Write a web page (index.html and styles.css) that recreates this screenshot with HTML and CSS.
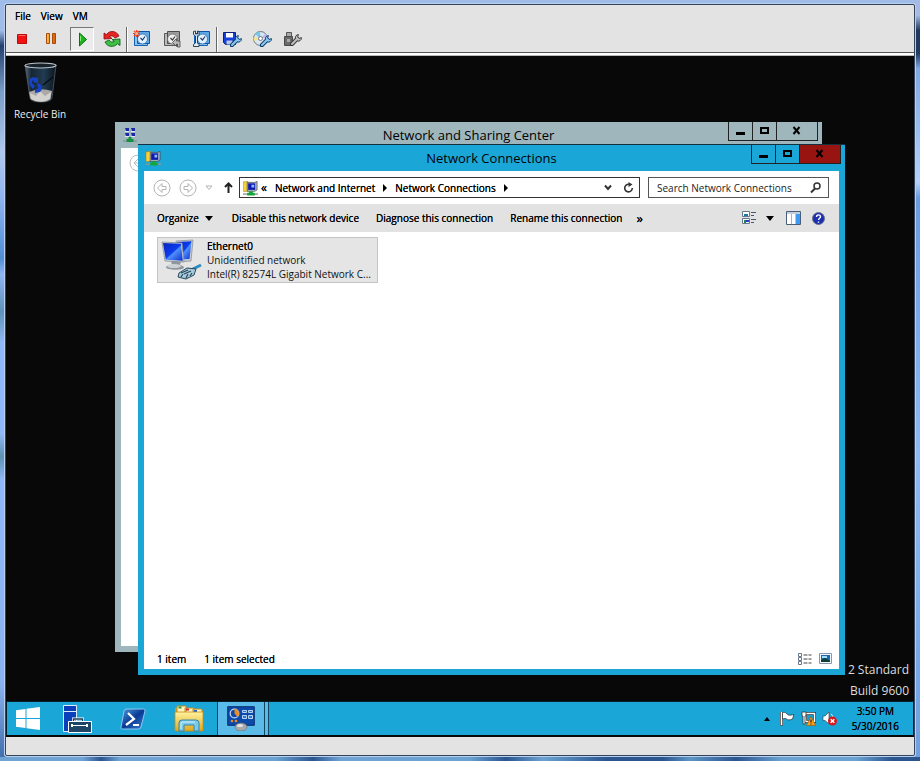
FILE: index.html
```html
<!DOCTYPE html>
<html lang="en">
<head>
  <meta charset="UTF-8">
  <meta name="viewport" content="width=device-width, initial-scale=1.0">
  <title>Network Connections</title>
  <link rel="stylesheet" href="styles.css">
</head>
<body>

<!-- shared shapes -->
<svg width="0" height="0" class="defs" aria-hidden="true">
  <defs>
    <linearGradient id="screen" x1="0" y1="0" x2="1" y2="1">
      <stop offset="0" stop-color="#0a24b8"/><stop offset=".5" stop-color="#0c3df0"/><stop offset=".55" stop-color="#4f90ff"/><stop offset="1" stop-color="#0c2cc8"/>
    </linearGradient>
    <linearGradient id="folder" x1="0" y1="0" x2="0" y2="1">
      <stop offset="0" stop-color="#fff2a0"/><stop offset="1" stop-color="#e0a81c"/>
    </linearGradient>
    <linearGradient id="bin" x1="0" y1="0" x2="1" y2="0">
      <stop offset="0" stop-color="#596b7b"/><stop offset=".2" stop-color="#162634"/><stop offset=".6" stop-color="#213b50"/><stop offset="1" stop-color="#0c151d"/>
    </linearGradient>
    <linearGradient id="ps" x1="0" y1="0" x2="1" y2="1">
      <stop offset="0" stop-color="#4f9ee0"/><stop offset=".5" stop-color="#0a3a94"/><stop offset="1" stop-color="#3a84d0"/>
    </linearGradient>
    <linearGradient id="pause" x1="0" y1="0" x2="1" y2="0">
      <stop offset="0" stop-color="#ffc04a"/><stop offset="1" stop-color="#d85a00"/>
    </linearGradient>
    <symbol id="net-folder" viewBox="0 0 16 16">
      <path d="M0 1.500L5 1l1 1v9l-5 1-1-1z" fill="#f6d23c" stroke="#a58318" stroke-width=".6"/>
      <path d="M4.500 2h8l2.500-1v9l-2.500 1.500h-8z" fill="#b4bac6" stroke="#333945" stroke-width=".7"/>
      <path d="M5.500 3H13v7H5.500z" fill="#0d1ab0"/><path d="M9 4.500h3v3H9z" fill="#8fb8ff"/>
      <path d="M0 14.500h16" stroke="#8c9892" stroke-width="1.500"/>
      <path d="M6.500 11.500h4V13h2v3h-8v-3h2z" fill="#13a63c"/>
    </symbol>
    <symbol id="snapshot" viewBox="0 0 18 18">
      <path d="M1.500 3.500h13v12h-13z" fill="#8cc4f0" stroke="#1562b4"/>
      <path d="M4.500 1.500h12v12h-12z" fill="#5fa8e6" stroke="#0c55aa"/>
      <circle cx="9.500" cy="9" r="5" fill="#e3f1fd" stroke="#2a6cb0" stroke-width=".8"/>
      <path d="M7.500 8l2 2 2.500-3.500" fill="none" stroke="#1c3f70" stroke-width="1.200"/>
    </symbol>
    <symbol id="wrench" viewBox="0 0 10 10">
      <path d="M1.500 8.500L6 4" stroke="#0d3d6e" stroke-width="3.400" stroke-linecap="round"/>
      <path d="M5 4.500a2.500 2.500 0 0 1 2-4l-.6 2 1.200 1.200L9.500 3a2.500 2.500 0 0 1-4 2.400z" fill="#8cc8ee" stroke="#0d3d6e" stroke-width=".8"/>
      <path d="M1.700 8.300L6 4" stroke="#8cc8ee" stroke-width="1.800" stroke-linecap="round"/>
    </symbol>
  </defs>
</svg>

<main class="console">
  <nav class="menu">
    <button>File</button>
    <button>View</button>
    <button>VM</button>
  </nav>

  <div class="toolbar">
    <div class="tools">
      <button aria-label="Power off"><svg width="18" height="18"><path d="M4.500 4.500h9v9h-9z" fill="#f31111" stroke="#b80b0b"/><path d="M5.500 5.500h7" stroke="#ff6a5e"/></svg></button>
      <button aria-label="Suspend"><svg width="18" height="18"><path d="M3.500 3.500h3v10h-3zM9.500 3.500h3v10h-3z" fill="url(#pause)" stroke="#a84a08"/></svg></button>
      <button class="pressed" aria-label="Power on"><svg width="18" height="18"><path d="M6.500 3v13l7-6.500z" fill="#1fb51f" stroke="#0d6d12"/><path d="M7.500 6v5" stroke="#83ea74"/></svg></button>
      <button aria-label="Reset"><svg width="18" height="18"><path d="M1 9V3L3.500 4.500c3-4.500 10-4 12.500 1.500L12 8C10 5.500 8 5.500 6.500 6.500L9 8.500z" fill="#e52323" stroke="#8c0c0c" stroke-width=".8"/><path d="M17 9v6.500l-2.600-1.700c-3.500 4-10 3.500-12.400-1.800l4-2c1.600 2.300 3.500 2.500 5.300 1.300L9 9.500z" fill="#3fc044" stroke="#0a5411" stroke-width=".8"/></svg></button>
    </div>
    <span class="split"></span>
    <div class="tools">
      <button aria-label="Take snapshot"><svg width="18" height="18"><use href="#snapshot"/><path d="M3.500 0v7M0 3.500h7M1 1l5 5M6 1L1 6" stroke="#f04a24" stroke-width="1.200"/><circle cx="3.500" cy="3.500" r="1.500" fill="#ffb08a"/></svg></button>
      <button aria-label="Revert to snapshot" class="off"><svg width="18" height="18"><use href="#snapshot"/><path d="M9.500 12.500l4-4v2.500h3.500v6h-2.500v-3h-1V16.500z" fill="#bbb" stroke="#444" stroke-width=".8"/></svg></button>
      <button aria-label="Manage snapshots"><svg width="18" height="18"><use href="#snapshot"/><path d="M.5 1.500v3L2.500 6v7l-2 1.500v2h5.500v-2L4.500 13V6L6 4.500v-3L4.500 1v3h-2V1z" fill="#dcecf6" stroke="#20303e" stroke-width=".9"/></svg></button>
    </div>
    <span class="split"></span>
    <div class="tools">
      <button aria-label="Floppy settings"><svg width="20" height="18"><path d="M1.500 2.500h12v12h-10l-2-2z" fill="#1640d8" stroke="#0b2078"/><path d="M4 3h7v4.500H4z" fill="#fff"/><path d="M4.500 10.500h6v4h-6z" fill="#b8c8e8"/><use href="#wrench" x="8" y="5" width="12" height="12"/></svg></button>
      <button aria-label="CD/DVD settings"><svg width="20" height="18"><circle cx="8.500" cy="8.500" r="7" fill="#dbe6f0" stroke="#6b7784"/><path d="M8.500 8.500L3 4a7 7 0 0 1 5-2.500z" fill="#73c8e8"/><path d="M8.500 8.500L2 11a7 7 0 0 1-.2-4z" fill="#f1e58f"/><path d="M8.500 8.500l5-5a7 7 0 0 1 2 4z" fill="#c8b3ef"/><circle cx="8.500" cy="8.500" r="2" fill="#fff" stroke="#778"/><use href="#wrench" x="8" y="5" width="12" height="12"/></svg></button>
      <button aria-label="USB settings" class="off"><svg width="20" height="18"><path d="M4.500 2.500h5v4h-5z" fill="#aaa" stroke="#555"/><path d="M2.500 6.500h8v9h-8z" fill="#6a6a6a" stroke="#4a4a4a"/><path d="M5 9h3v3H5z" fill="#aaa"/><use href="#wrench" x="8" y="4" width="12" height="12"/></svg></button>
    </div>
  </div>

  <section class="desktop">
    <a class="shortcut" href="#">
      <svg width="36" height="42" viewBox="0 0 36 42">
        <path d="M3 3l5 33q1 4 11 4t11-4l4-33z" fill="url(#bin)" stroke="#4f5d68" stroke-width=".8"/>
        <path d="M7 30q11-5 23-1l-1.500 8Q25 40 19 40T8.500 37z" fill="#aaa9a7"/>
        <path d="M8 31l6 3 4-5 5 5 6-4-1 7q-9 5-19 0z" fill="#d3d2cf"/>
        <path d="M8 17q2-3 6-1l2-1v6l-5-1 1-2q-2 0-2 3l3 3-2 3q-5-4-3-10zM16 21l3 2q2 5-1 7l-5 1v-3l3-1q1-2-1-4z" fill="#1742c8"/>
        <path d="M31 15l-10 8" stroke="#070d12" stroke-width="1.500"/>
        <ellipse cx="18.500" cy="3.500" rx="15.500" ry="2.500" fill="#17212a" stroke="#b9c4cc" stroke-width="1.200"/>
      </svg>
      Recycle Bin
    </a>

    <p class="watermark">2 Standard<br>Build 9600</p>

    <section class="window back">
      <header class="titlebar">
        <svg class="app-icon" width="14" height="16" viewBox="0 0 14 16"><path d="M2 1h4v3H3zM8 1h4v3H9zM2 6h4v3H3zM8 6h4v3H9z" fill="#1a28a8"/><path d="M2 4.500h4M8 4.500h4M2 9.500h4M8 9.500h4" stroke="#dfe8ee"/><path d="M0 14h14" stroke="#7e8a8e"/><path d="M5.500 10h3v2h2v3h-7v-3h2z" fill="#10923c"/></svg>
        <h2>Network and Sharing Center</h2>
        <div class="caption">
          <button aria-label="Minimize"><svg width="10" height="10"><path d="M0 6h9v3H0z"/></svg></button>
          <button aria-label="Maximize"><svg width="10" height="10"><path d="M1 2h7v5H1z" fill="none" stroke="#000" stroke-width="2"/></svg></button>
          <button class="close" aria-label="Close"><svg width="10" height="10"><path d="M1.500 1l6 7M7.500 1l-6 7" stroke="#000" stroke-width="2"/></svg></button>
        </div>
      </header>
      <div class="pane back-pane">
        <svg width="18" height="18"><circle cx="9" cy="9" r="8" fill="none" stroke="#bbb"/><path d="M13 9H5m4-4L5 9l4 4" fill="none" stroke="#bbb"/></svg>
      </div>
    </section>

    <section class="window front">
      <header class="titlebar">
        <svg class="app-icon" width="15" height="16"><use href="#net-folder"/></svg>
        <h1>Network Connections</h1>
        <div class="caption">
          <button aria-label="Minimize"><svg width="10" height="10"><path d="M0 6h9v3H0z"/></svg></button>
          <button aria-label="Maximize"><svg width="10" height="10"><path d="M1 2h7v5H1z" fill="none" stroke="#000" stroke-width="2"/></svg></button>
          <button class="close" aria-label="Close"><svg width="10" height="10"><path d="M1.500 1l6 7M7.500 1l-6 7" stroke="#000" stroke-width="2"/></svg></button>
        </div>
      </header>

      <div class="pane">
        <div class="address-row">
          <button aria-label="Back"><svg width="18" height="18"><circle cx="9" cy="9" r="8" fill="none" stroke="#b4b4b4"/><path d="M4.500 9L9 4.500V7.500h4v3H9v3z" fill="#fff" stroke="#b4b4b4"/></svg></button>
          <button aria-label="Forward"><svg width="18" height="18"><circle cx="9" cy="9" r="8" fill="none" stroke="#b4b4b4"/><path d="M13.500 9L9 4.500V7.500H5v3h4v3z" fill="#fff" stroke="#b4b4b4"/></svg></button>
          <button class="recent" aria-label="Recent locations"><svg width="8" height="6"><path d="M1 1h6L4 4.500z" fill="#fff" stroke="#b4b4b4"/></svg></button>
          <button class="up" aria-label="Up"><svg width="9" height="11"><path d="M4.500 11V2M1 5l3.500-3.500L8 5" fill="none" stroke="#222" stroke-width="2"/></svg></button>
          <div class="address">
            <svg width="15" height="16"><use href="#net-folder"/></svg>
            <span class="more">«</span>
            <a href="#">Network and Internet</a>
            <svg width="4" height="8"><path d="M0 0l4 4-4 4z"/></svg>
            <a href="#">Network Connections</a>
            <svg width="4" height="8"><path d="M0 0l4 4-4 4z"/></svg>
            <button class="history" aria-label="Previous locations"><svg width="8" height="7"><path d="M1 1.500L4 5l3-3.500" fill="none" stroke="#333" stroke-width="2"/></svg></button>
            <button aria-label="Refresh"><svg width="11" height="11"><path d="M6 2.300A3.800 3.800 0 1 0 9.300 6" fill="none" stroke="#333" stroke-width="1.600"/><path d="M5.500 0l4 2.500-4 2.500z" fill="#333"/></svg></button>
          </div>
          <label class="search">
            <input type="search" placeholder="Search Network Connections" aria-label="Search Network Connections">
            <svg width="11" height="11"><circle cx="7" cy="4" r="3" fill="none" stroke="#333" stroke-width="1.500"/><path d="M5 6.500L1 10.500" stroke="#333" stroke-width="2"/></svg>
          </label>
        </div>

        <div class="commands">
          <button class="organize">Organize <svg width="8" height="5"><path d="M0 0h8L4 5z"/></svg></button>
          <button>Disable this network device</button>
          <button>Diagnose this connection</button>
          <button>Rename this connection</button>
          <button class="overflow" aria-label="More commands">»</button>
          <button class="view" aria-label="Change view">
            <svg width="15" height="14"><path d="M.5.500h7v5h-7zM.5 7.500h7v5h-7z" fill="#fff" stroke="#68788c"/><path d="M2 3h4v2H2z" fill="#177aa8"/><path d="M2 9h2v3H2z" fill="#178c4a"/><path d="M4 9h3v2H4z" fill="#293bb8"/><path d="M9 1.500h5M9 4.500h3M9 8.500h5M9 11.500h3" stroke="#48586c"/></svg>
          </button>
          <button class="drop" aria-label="View options"><svg width="8" height="5"><path d="M0 0h8L4 5z"/></svg></button>
          <button class="preview" aria-label="Preview pane"><svg width="15" height="14"><path d="M.5.500h14v13H.5z" fill="#fff" stroke="#4a5c78"/><path d="M1 1h13v2H1z" fill="#c3cedb"/><path d="M9.500 3h4.500v10H9.500z" fill="#3f9bf2"/><path d="M5.500 3v10" stroke="#a8b0bb"/></svg></button>
          <button class="help" aria-label="Help"><svg width="13" height="13" viewBox="0 0 13 13"><circle cx="6.500" cy="6.500" r="6" fill="#1c2fb0" stroke="#6b7384"/><path d="M4.500 5c0-3 4-2.600 4-.3 0 1.500-2 1.500-2 3.300M6.500 9.500v1.300" fill="none" stroke="#fff" stroke-width="1.400"/></svg></button>
        </div>

        <div class="items">
          <a class="item" href="#">
            <svg width="42" height="42" viewBox="0 0 42 42">
              <path d="M15 2l17-1-2 21-14 1z" fill="#c8ccd0" stroke="#8c949b" stroke-width=".8"/>
              <path d="M16 3l14.500-.8L28.500 20 17 20.500z" fill="url(#screen)"/>
              <path d="M10 22h10l-1 4q4 1 4 2.500c0 3-18 3-18-.5q0-1.500 6-2z" fill="#8f969d"/>
              <ellipse cx="13" cy="27" rx="7" ry="2" fill="#cdd2d6"/>
              <path d="M1 3l20 1 2 19-19-1z" fill="#d3d7da" stroke="#858d96" stroke-width=".8"/>
              <path d="M2 4l18 .8 1.800 17-17-1z" fill="url(#screen)"/>
              <path d="M40 26l-8 4-3 2" stroke="#2d8dc0" stroke-width="3" fill="none"/>
              <path d="M18 34l8-5 9 1-2 6-8 4-8-2z" fill="#a8cbdc" stroke="#29465a"/>
              <path d="M20 34l7-3M23 35l7-3M20 38l2-3M25 39l2-4M29 37l2-3" stroke="#29465a" stroke-width="1.200"/>
            </svg>
            <span class="item-text">
              <strong>Ethernet0</strong>
              <span>Unidentified network</span>
              <span>Intel(R) 82574L Gigabit Network C...</span>
            </span>
          </a>
        </div>

        <footer class="status">
          <span>1 item</span>
          <span>1 item selected</span>
          <button class="details" aria-label="Details view"><svg width="14" height="12"><path d="M.5.500h3v3h-3zM.5 4.500h3v3h-3zM.5 8.500h3v3h-3z" fill="#fff" stroke="#68788c"/><path d="M5.500 2h4M10.500 2h3M5.500 6h4M10.500 6h3M5.500 10h4M10.500 10h3" stroke="#444"/></svg></button>
          <button aria-label="Large icons"><svg width="13" height="12"><path d="M.5.500h12v10H.5z" fill="#f4f8fc" stroke="#8898ac"/><path d="M2 2h9v7H2z" fill="#1d69a8"/><path d="M2 7l4-2 5 3v1H2z" fill="#0e4034"/><path d="M3 4h5" stroke="#9be0ff" stroke-width="2"/></svg></button>
        </footer>
      </div>
    </section>
  </section>

  <footer class="taskbar">
    <button class="start" aria-label="Start"><svg width="24" height="23" viewBox="0 0 24 23"><path d="M0 3.300l9.500-1.300v9H0zM10.500 1.800L24 0v11H10.500zM0 12h9.500v9L0 19.700zM10.500 12H24v11l-13.500-1.800z" fill="#fff"/></svg></button>
    <button aria-label="Server Manager"><svg width="30" height="30" viewBox="0 0 30 30"><path d="M1.500 1.500h13v26h-13z" fill="#0c3fba" stroke="#dcecff"/><path d="M1.500 7.500h13" stroke="#dcecff"/><path d="M11.500 18v-3h9v3" fill="none" stroke="#fff" stroke-width="3"/><path d="M11.500 18v-3h9v3" fill="none" stroke="#1d3c58" stroke-width="1.500"/><path d="M6.500 17.500h23v11h-23z" fill="#1f4566" stroke="#fff"/><path d="M9 21.500h17" stroke="#fff"/><path d="M10 20v3M25 20v3" stroke="#fff" stroke-width="2"/></svg></button>
    <button aria-label="Windows PowerShell"><svg width="26" height="22" viewBox="0 0 26 22"><path d="M6 1h17.500q2 0 1.500 2l-4 16q-.5 2-2.500 2H2.500Q.5 21 1 19L4 3q.5-2 2-2z" fill="url(#ps)" stroke="#8ec7ee"/><path d="M8 5l6 6-8 6M13 17h6" fill="none" stroke="#fff" stroke-width="2.200"/></svg></button>
    <button aria-label="File Explorer"><svg width="30" height="27" viewBox="0 0 30 27"><path d="M1 3h11l2 3h15v20H1z" fill="#d79d20"/><path d="M3 1h9v8H3zM11 3h9v8h-9zM19 4h9v8h-9z" fill="#fff3bd" stroke="#be8c20"/><path d="M4.500 2.500h3" stroke="#279b37" stroke-width="2"/><path d="M12 4.500h3" stroke="#d02b2b" stroke-width="2"/><path d="M20 6h3" stroke="#2860cc" stroke-width="2"/><path d="M1 7h28v18q0 1-1 1H2q-1 0-1-1z" fill="url(#folder)" stroke="#c08d18" stroke-width=".8"/><path d="M5 26v-8q0-3 3-3h14q3 0 3 3v8h-5v-6H10v6z" fill="#7cc9e8" stroke="#3288ac"/><path d="M7 24v-5q0-2 2-2h12" fill="none" stroke="#d5f2fc"/></svg></button>
    <button class="active" aria-label="Network Connections"><svg width="28" height="25" viewBox="0 0 28 25"><path d="M.7.700h26.600v18.600H.7z" fill="#0c49a9" stroke="#092f70"/><circle cx="7.500" cy="7.500" r="4.300" fill="none" stroke="#b8d4f3" stroke-width="1.300"/><path d="M7.500 7.500V2.500a5 5 0 0 1 3 8.500z" fill="#f08a20"/><path d="M15.500 4.500h4v2h-4zM21.500 4.500h4v2h-4zM15.500 9.500h4v3h-4zM21.500 9.500h4v3h-4z" fill="#2677d2" stroke="#b8d4f3"/><circle cx="5" cy="15" r="1.300" fill="#f08a20"/><circle cx="9" cy="15" r="1.300" fill="#f08a20"/><ellipse cx="14" cy="21" rx="6" ry="4" fill="#a8a8aa" stroke="#65676b" stroke-width=".6"/><ellipse cx="13" cy="19.500" rx="3" ry="1.500" fill="#e2e2e4"/></svg></button>
    <span class="stack"></span>

    <div class="tray">
      <button aria-label="Show hidden icons"><svg width="6" height="4"><path d="M0 4h6L3 0z"/></svg></button>
      <button class="flag" aria-label="Action Center"><svg width="15" height="15"><path d="M1.500 1v13.500" stroke="#444" stroke-width="3"/><path d="M1.500 1v13" stroke="#fff" stroke-width="1.500"/><path d="M2.500 1.500c4-1 4 2 6 2.500 1.500.400 3 0 5.500-.5L12.500 8c-3 1.500-5 1-6 0s-2-.5-4 0z" fill="#fff" stroke="#333" stroke-width=".8"/></svg></button>
      <button aria-label="Network"><svg width="15" height="15"><path d="M4.500 2.500h9v8h-9z" fill="#1b9bd0" stroke="#333" stroke-width="3"/><path d="M4.500 2.500h9v8h-9z" fill="none" stroke="#fff" stroke-width="1.500"/><path d="M1 1h4v4H4v8H2V5H1z" fill="#fff" stroke="#333" stroke-width=".8"/><path d="M10 5.500l4.500 9h-9z" fill="#ffa21a" stroke="#9a5400" stroke-width=".6"/><path d="M10 8.500v3M10 12.500v1" stroke="#222" stroke-width="1.200"/></svg></button>
      <button aria-label="Volume muted"><svg width="16" height="15"><path d="M1 5h2l4-4v12L3 9.500H1z" fill="#fff" stroke="#333" stroke-width=".6"/><path d="M9 3q2 1.500 2 4" fill="none" stroke="#fff"/><circle cx="10.500" cy="10" r="4.500" fill="#d6181f"/><path d="M8.700 8.200l3.600 3.600M12.300 8.200l-3.600 3.600" stroke="#fff" stroke-width="1.500"/></svg></button>
      <button class="clock">3:50 PM<br>5/30/2016</button>
    </div>
  </footer>
</main>

</body>
</html>
```
FILE: styles.css
```css
* {
  box-sizing: border-box;
}
body {
  margin: 0;
  height: 100vh;
  padding: 4px 5px 5px;
  display: flex;
  font-family: "Open Sans", "Noto Sans", sans-serif;
  font-size: 10px;
  color: #000;
  /* glass frame: bottom strip, right side, left side */
  background:
    linear-gradient(90deg, #6fa3d4 9%, #2c5590 11%, #6fa3d4 13%, #6aa3d2 30%, #2c5590 34%, #6fa3d4 37%, #6aa3d2 51%, #2c5590 55%, #6aa3d2 59%, #2c5590 66%, #2c5590 72%, #5c95c4 75%, #2c5590 80%, #6aa3d2 85%, #6aa3d2 93%, #2c5590 97%) bottom / 100% 4px no-repeat,
    linear-gradient(#a5bbe4 2%, #1f3a60 4%, #1f3a60 7%, #7fa8e0 9%, #b4d0f8 24%, #6a9be0 26%, #8fb8f4 60%, #6f9fe0) right / 6px 100% no-repeat,
    linear-gradient(#a0bce8 4%, #24406c 6%, #7a9cc8 12%, #b0c8ec 20%, #8fb4f2 26%, #4f8fd4 34%, #90b6f4 36%, #5d92b8 41%, #90b8f8 45%, #90b8f8 57%, #5b93b0 60%, #90b8f8 63%, #8ab2f0 90%, #3d6ca8);
}
button {
  padding: 0;
  border: 0;
  background: none;
  font: inherit;
  color: inherit;
  text-shadow: inherit;
  display: flex;
  align-items: center;
  justify-content: center;
  white-space: nowrap;
}
a {
  color: inherit;
  text-decoration: none;
}
h1, h2, p {
  margin: 0;
  font-weight: 400;
}
svg {
  flex: none;
  display: block;
}
.defs {
  position: absolute;
}

/* firmer strokes for the small labels */
.menu,
.address,
.commands,
.status,
.tray,
.item-text strong {
  text-shadow: 0 0 0 #000;
}

/* VM console */
.console {
  flex: 1;
  display: flex;
  flex-direction: column;
  background: #e3e3e3;
  border: 1px solid #33435a;
  border-radius: 2px;
  box-shadow: 0 0 0 1px #b9cfee;
  padding-bottom: 18px;
}
.menu {
  display: flex;
  gap: 10px;
  height: 21px;
  padding-left: 9px;
}
.toolbar {
  display: flex;
  align-items: center;
  gap: 2px;
  height: 27px;
  padding-left: 4px;
  border-bottom: 1px solid #555;
}
.tools {
  display: flex;
  gap: 6px;
}
.tools button {
  width: 24px;
  height: 24px;
}
.tools .pressed {
  border: 1px solid #777;
  border-right-color: #fff;
  border-bottom-color: #fff;
  background: #ebebeb;
}
.off svg {
  filter: grayscale(1);
}
.split {
  width: 2px;
  height: 25px;
  border-left: 1px solid #666;
  border-right: 1px solid #fff;
}

/* desktop */
.desktop {
  flex: 1;
  margin-top: 3px;
  position: relative;
  background: #080808;
  box-shadow: 0 -1px #bbb, 0 -3px #fff;
}
.shortcut {
  position: absolute;
  left: 3px;
  top: 6px;
  width: 62px;
  display: flex;
  flex-direction: column;
  align-items: center;
  gap: 3px;
  color: #eee;
}
.watermark {
  position: absolute;
  right: 5px;
  bottom: 0;
  font-size: 12px;
  line-height: 21px;
  text-align: right;
  color: #ddd;
}

/* windows */
.window {
  position: absolute;
  display: flex;
  flex-direction: column;
  padding: 0 6px 6px;
}
.back {
  left: 109px;
  top: 66px;
  right: 92px;
  bottom: 49px;
  background: #9fb6bd;
}
.front {
  left: 132px;
  top: 88px;
  right: 69px;
  bottom: 26px;
  background: #1ba6d8;
  border-top: 1px solid #14303c;
}
.titlebar {
  display: grid;
  grid-template-columns: 1fr auto 1fr;
  align-items: center;
  height: 26px;
}
.titlebar h1, .titlebar h2 {
  font-size: 13px;
  line-height: 18px;
}
.app-icon {
  margin-left: 2px;
}
.caption {
  display: flex;
  justify-self: end;
  align-self: start;
  margin-right: -2px;
}
.caption button {
  width: 24px;
  height: 19px;
  border: 1px solid #222;
  border-top: 0;
  border-right: 0;
}
.caption .close {
  width: 42px;
  border-right: 1px solid #222;
}
.front .close {
  background: #981410;
}
.pane {
  flex: 1;
  display: flex;
  flex-direction: column;
  background: #fff;
}
.back-pane {
  padding: 6px 8px;
}

/* address row */
.address-row {
  display: flex;
  align-items: center;
  gap: 8px;
  height: 33px;
  padding: 0 10px 0 9px;
}
.up {
  margin: 0 -2px 0 3px;
}
.address {
  flex: 1;
  display: flex;
  align-items: center;
  gap: 8px;
  height: 21px;
  padding: 0 5px 0 3px;
  border: 1px solid #333;
}
.more {
  font-size: 12px;
  margin-left: -5px;
}
.history {
  margin-left: auto;
}
.address button + button {
  margin-left: 3px;
}
.search {
  display: flex;
  align-items: center;
  width: 181px;
  height: 21px;
  padding: 0 7px 0 8px;
  border: 1px solid #555;
}
.search input {
  flex: 1;
  min-width: 0;
  padding: 0;
  border: 0;
  outline: 0;
  background: none;
  font: inherit;
}
.search input::placeholder {
  color: #222;
}

/* command bar */
.commands {
  display: flex;
  align-items: center;
  gap: 17px;
  height: 28px;
  padding: 0 14px 0 13px;
  background: #e2e2e2;
}
.organize {
  gap: 6px;
  margin-right: 2px;
}
.overflow {
  font-size: 13px;
  margin-left: -3px;
}
.view {
  margin-left: auto;
}
.drop {
  margin-left: -8px;
}
.preview {
  margin-left: -5px;
}
.help {
  margin-left: -6px;
}

/* connection list */
.items {
  flex: 1;
  padding: 5px 13px;
}
.item {
  display: flex;
  gap: 4px;
  width: 221px;
  height: 46px;
  padding: 1px 3px;
  border: 1px solid #c4c4c4;
  background: #e5e5e5;
}
.item-text {
  display: flex;
  flex-direction: column;
  line-height: 14px;
  white-space: nowrap;
}
.item-text strong {
  font-weight: 400;
}
.item-text span {
  color: #111;
}
.status {
  display: flex;
  align-items: center;
  gap: 18px;
  height: 21px;
  padding: 0 7px 0 13px;
}
.details {
  margin-left: auto;
  margin-right: -11px;
}

/* taskbar */
.taskbar {
  display: flex;
  height: 36px;
  border: 1px solid #06202c;
  border-bottom: 2px solid #080808;
  background: #1ba6d8;
}
.taskbar > button {
  width: 56px;
}
.taskbar > .start {
  width: 42px;
}
.taskbar > .active {
  width: 48px;
  background: #5bbbe8;
  border-left: 1px solid #10475e;
  border-right: 1px solid #10475e;
}
.stack {
  width: 4px;
  background: #5bbbe8;
  border-right: 1px solid #10475e;
}
.tray {
  margin-left: auto;
  display: flex;
  align-items: center;
  gap: 6px;
  padding-right: 14px;
}
.tray .flag {
  margin-left: 4px;
}
.tray .clock {
  margin-left: 8px;
  line-height: 15px;
}
```
